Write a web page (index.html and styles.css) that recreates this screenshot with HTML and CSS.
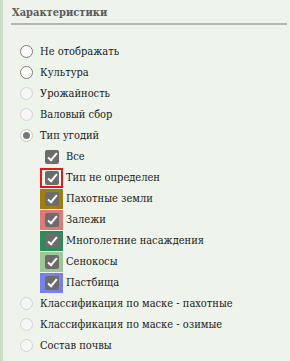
FILE: index.html
```html
<!DOCTYPE html>
<html lang="ru">
<head>
    <meta charset="UTF-8">
    <title>Характеристики</title>
    <link rel="stylesheet" href="styles.css">
</head>
<body>
    <div class="panel">
        <div class="panel-title">Характеристики</div>

        <ul class="option-list">
            <li class="option"><span class="radio"></span>Не отображать</li>
            <li class="option"><span class="radio"></span>Культура</li>
            <li class="option"><span class="radio disabled"></span>Урожайность</li>
            <li class="option"><span class="radio disabled"></span>Валовый сбор</li>
            <li class="option"><span class="radio checked"></span>Тип угодий</li>

            <li class="sub-option"><span class="swatch"><span class="check"></span></span>Все</li>
            <li class="sub-option"><span class="swatch outlined"><span class="check"></span></span>Тип не определен</li>
            <li class="sub-option"><span class="swatch" style="background:#a07c14"><span class="check"></span></span>Пахотные земли</li>
            <li class="sub-option"><span class="swatch" style="background:#dc7a7a"><span class="check"></span></span>Залежи</li>
            <li class="sub-option"><span class="swatch" style="background:#2e8a58"><span class="check"></span></span>Многолетние насаждения</li>
            <li class="sub-option"><span class="swatch" style="background:#9cc897"><span class="check"></span></span>Сенокосы</li>
            <li class="sub-option"><span class="swatch" style="background:#7880ea"><span class="check"></span></span>Пастбища</li>

            <li class="option"><span class="radio disabled"></span>Классификация по маске - пахотные</li>
            <li class="option"><span class="radio disabled"></span>Классификация по маске - озимые</li>
            <li class="option"><span class="radio disabled"></span>Состав почвы</li>
        </ul>
    </div>
</body>
</html>
```

FILE: styles.css
```css
body {
    margin: 0;
    background: #eef4ec;
    font-family: "DejaVu Serif Condensed", "DejaVu Serif", serif;
    font-stretch: condensed;
    font-size: 11px;
    color: #1a1a1a;
}
.panel {
    min-height: 361px;
    box-sizing: border-box;
    border-left: 3px solid #c8e0c6;
    padding: 6px 3px 0 8px;
}
.panel-title {
    font-weight: bold;
    color: #5a5a5a;
    padding: 0 0 3px 1px;
    line-height: 14px;
    border-bottom: 2px solid #b4b4b4;
}
.option-list {
    list-style: none;
    margin: 16px 0 0 9px;
    padding: 0;
}
.option,
.sub-option {
    display: flex;
    align-items: center;
    height: 21px;
}
.radio {
    width: 11px;
    height: 11px;
    border: 1px solid #7a7a7a;
    border-radius: 50%;
    background: #fff;
    margin-right: 7px;
    flex: none;
}
.radio.disabled {
    border-color: #d2d2d2;
    background: #f6f6f6;
}
.radio.checked {
    border-color: #c4c4c4;
    background: #fff;
    position: relative;
}
.radio.checked::after {
    content: "";
    position: absolute;
    left: 2px;
    top: 2px;
    width: 7px;
    height: 7px;
    border-radius: 50%;
    background: #777;
}
.sub-option {
    padding-left: 20px;
}
.swatch {
    width: 23px;
    height: 20px;
    box-sizing: border-box;
    display: flex;
    align-items: center;
    justify-content: center;
    margin-right: 3px;
    flex: none;
}
.swatch.outlined {
    border: 2px solid #e8141a;
}
.check {
    width: 14px;
    height: 14px;
    border-radius: 2px;
    background: #6c6c6c;
    position: relative;
}
.check::after {
    content: "";
    position: absolute;
    left: 5px;
    top: 1px;
    width: 3px;
    height: 8px;
    border: solid #fff;
    border-width: 0 2px 2px 0;
    transform: rotate(40deg);
}
```
